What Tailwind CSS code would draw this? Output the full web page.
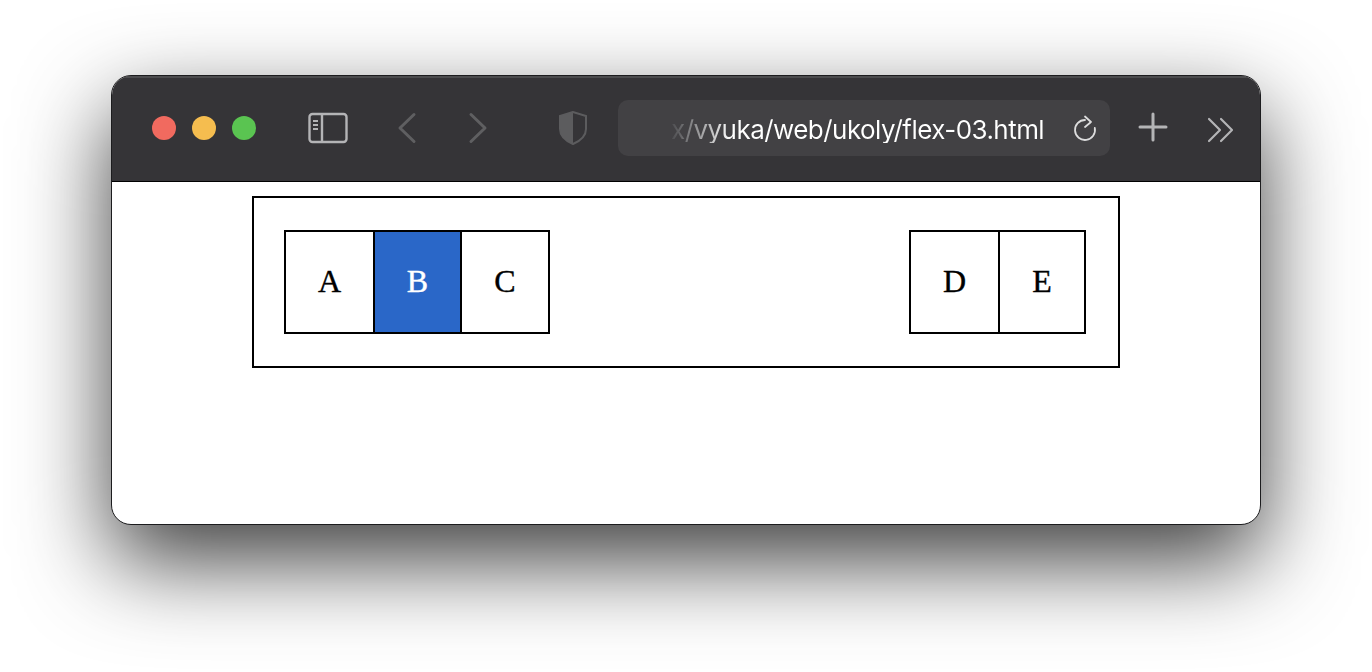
<!DOCTYPE html>
<html lang="en">
<head>
    <meta charset="UTF-8">
    <title>flex-03</title>
    <script src="https://cdn.jsdelivr.net/npm/@tailwindcss/browser@4"></script>
</head>
<body class="h-[672px] overflow-hidden bg-white">
    <!-- Browser window -->
    <div class="ml-[111px] mt-[75px] w-[1150px] h-[450px] flex flex-col rounded-[20px] overflow-hidden border border-[#1c1c1e] bg-white shadow-[0_36px_90px_rgba(0,0,0,0.76)]">
        <!-- Toolbar -->
        <div class="h-[106px] shrink-0 flex items-center pb-1 bg-[#353437] border-b border-black border-t-2 border-t-[#4c4c4e]">
            <div class="ml-[40px] flex gap-4">
                <span class="size-6 rounded-full bg-[#f16a5f]"></span>
                <span class="size-6 rounded-full bg-[#f5bd4f]"></span>
                <span class="size-6 rounded-full bg-[#5ac451]"></span>
            </div>
            <svg class="ml-[52px]" width="40" height="32" viewBox="0 0 40 32" fill="none" stroke="#b4b4b6" stroke-width="2.4">
                <rect x="1.5" y="2" width="37" height="28" rx="3"/>
                <path d="M14 2v28"/>
                <path d="M5 9h5M5 13h5M5 17h5" stroke-width="1.8"/>
            </svg>
            <svg class="ml-[49px]" width="20" height="32" viewBox="0 0 20 32" fill="none" stroke="#5f5f61" stroke-width="3" stroke-linecap="round" stroke-linejoin="round">
                <path d="M17 2.5 3 16l14 13.5"/>
            </svg>
            <svg class="ml-[51px]" width="20" height="32" viewBox="0 0 20 32" fill="none" stroke="#5f5f61" stroke-width="3" stroke-linecap="round" stroke-linejoin="round">
                <path d="M3 2.5 17 16 3 29.5"/>
            </svg>
            <svg class="ml-[71px]" width="28" height="34" viewBox="0 0 28 34">
                <path d="M14 1 1 5v13c0 7 6 12 13 15 7-3 13-8 13-15V5z" fill="none" stroke="#5c5c5e" stroke-width="2"/>
                <path d="M14 1 1 5v13c0 7 6 12 13 15z" fill="#5c5c5e"/>
            </svg>
            <!-- Address bar -->
            <div class="ml-[31px] w-[492px] h-[56px] flex items-center rounded-[10px] bg-[#424144]">
                <span class="ml-[53px] mt-[4px] text-[26px] leading-none tracking-[-0.55px] whitespace-nowrap font-['Inter','Noto_Sans',sans-serif] bg-linear-to-r from-[#4c4c4f] from-0 to-white to-[60px] bg-clip-text text-transparent">x/vyuka/web/ukoly/flex-03.html</span>
                <svg class="ml-auto mr-[13px] mt-[2px]" width="24" height="30" viewBox="0 0 24 30" fill="none" stroke="#dcdcdd" stroke-width="1.8" stroke-linecap="round" stroke-linejoin="round">
                    <path d="M12 6A10 10 0 1 0 21.8 14"/>
                    <path d="M12 2.5l6 5.5-6 5"/>
                </svg>
            </div>
            <svg class="ml-[28px] mb-[1px]" width="30" height="30" viewBox="0 0 30 30" stroke="#b4b4b6" stroke-width="3" stroke-linecap="round">
                <path d="M15 2v26M2 15h26"/>
            </svg>
            <svg class="ml-[39px] mt-[4px]" width="28" height="26" viewBox="0 0 28 26" fill="none" stroke="#b4b4b6" stroke-width="2.2" stroke-linecap="round" stroke-linejoin="round">
                <path d="M2 2l11 11L2 24M14 2l11 11-11 11"/>
            </svg>
        </div>
        <!-- Page content -->
        <div class="flex-1 pt-[14px] pl-[140px]">
            <div class="w-[868px] h-[172px] flex justify-between items-start pl-[30px] pr-[32px] pt-[32px] border-2 border-black font-['Liberation_Serif',serif] text-[32px] text-black [-webkit-text-stroke:0.4px]">
                <div class="flex h-[104px] border-2 border-black">
                    <div class="w-[87px] flex items-center justify-center"><span class="mb-[2px]">A</span></div>
                    <div class="w-[89px] flex items-center justify-center border-x-2 border-black bg-[#2a67c8] text-white"><span class="mb-[2px]">B</span></div>
                    <div class="w-[86px] flex items-center justify-center"><span class="mb-[2px]">C</span></div>
                </div>
                <div class="flex h-[104px] border-2 border-black">
                    <div class="w-[89px] flex items-center justify-center border-r-2 border-black"><span class="mb-[2px]">D</span></div>
                    <div class="w-[84px] flex items-center justify-center"><span class="mb-[2px]">E</span></div>
                </div>
            </div>
        </div>
    </div>
</body>
</html>
